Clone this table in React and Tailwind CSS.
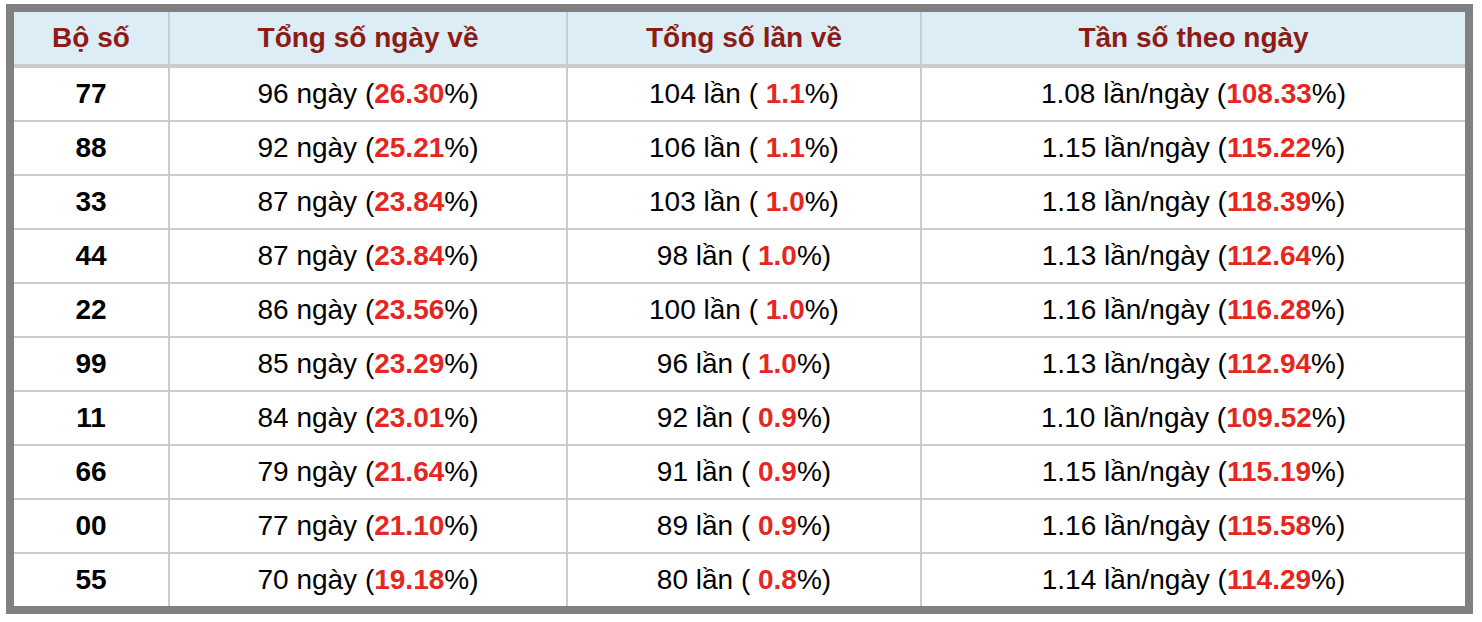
const rows = [
    ['77', '96', '26.30', '104', '1.1', '1.08', '108.33'],
    ['88', '92', '25.21', '106', '1.1', '1.15', '115.22'],
    ['33', '87', '23.84', '103', '1.0', '1.18', '118.39'],
    ['44', '87', '23.84', '98', '1.0', '1.13', '112.64'],
    ['22', '86', '23.56', '100', '1.0', '1.16', '116.28'],
    ['99', '85', '23.29', '96', '1.0', '1.13', '112.94'],
    ['11', '84', '23.01', '92', '0.9', '1.10', '109.52'],
    ['66', '79', '21.64', '91', '0.9', '1.15', '115.19'],
    ['00', '77', '21.10', '89', '0.9', '1.16', '115.58'],
    ['55', '70', '19.18', '80', '0.8', '1.14', '114.29'],
];

const headers = ['Bộ số', 'Tổng số ngày về', 'Tổng số lần về', 'Tần số theo ngày'];

function Red({ children }) {
    return <span className="font-bold text-[#e4281f]">{children}</span>;
}

export default function App() {
    return (
        <div className="w-[1482px] h-[622px] bg-white pl-[6px] pt-[4px]" style={{ fontFamily: '"Liberation Sans", Arial, sans-serif' }}>
            <div className="w-[1467px] border-8 border-[#808080] bg-white">
                <div className="grid grid-cols-[156px_398px_354px_543px] text-[28px] text-black">
                    {headers.map((h, i) => (
                        <div
                            key={h}
                            className={`h-[56px] flex items-center justify-center bg-[#dcedf6] font-bold text-[#8e1b14] border-b-4 border-[#cccccc] ${i < 3 ? 'border-r-2' : ''}`}
                        >
                            {h}
                        </div>
                    ))}

                    {rows.map((r, idx) => {
                        const last = idx === rows.length - 1;
                        const rowCls = `flex items-center justify-center border-[#cccccc] ${last ? 'h-[52px]' : 'h-[54px] border-b-2'}`;
                        return [
                            <div key={r[0] + 'a'} className={`${rowCls} border-r-2 font-bold`}>
                                {r[0]}
                            </div>,
                            <div key={r[0] + 'b'} className={`${rowCls} border-r-2`}>
                                <span>
                                    {r[1]} ngày (<Red>{r[2]}</Red>%)
                                </span>
                            </div>,
                            <div key={r[0] + 'c'} className={`${rowCls} border-r-2`}>
                                <span>
                                    {r[3]} lần ( <Red>{r[4]}</Red>%)
                                </span>
                            </div>,
                            <div key={r[0] + 'd'} className={rowCls}>
                                <span>
                                    {r[5]} lần/ngày (<Red>{r[6]}</Red>%)
                                </span>
                            </div>,
                        ];
                    })}
                </div>
            </div>
        </div>
    );
}
